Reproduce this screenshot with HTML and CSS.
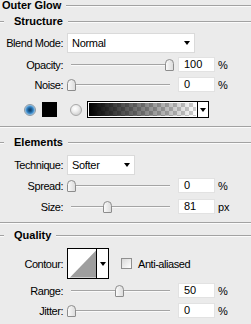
FILE: index.html
```html
<!DOCTYPE html>
<html>
<head>
<meta charset="utf-8">
<link rel="stylesheet" href="styles.css">
</head>
<body>
<div class="panel">
  <div class="title-row"><span class="title">Outer Glow</span><span class="rule"></span></div>

  <div class="legend legend-structure"><span class="rule lead"></span><span class="legend-text">Structure</span><span class="rule"></span></div>

  <div class="row row-blend">
    <span class="lbl">Blend Mode:</span>
    <div class="select select-blend"><span class="select-text">Normal</span><span class="arrow"></span></div>
  </div>

  <div class="row row-slider row-opacity">
    <span class="lbl">Opacity:</span>
    <div class="slider"><span class="track"></span><span class="thumb" style="--p:1"></span></div>
    <span class="field">100</span><span class="unit">%</span>
  </div>

  <div class="row row-slider row-noise">
    <span class="lbl">Noise:</span>
    <div class="slider"><span class="track"></span><span class="thumb" style="--p:0"></span></div>
    <span class="field">0</span><span class="unit">%</span>
  </div>

  <div class="row-color">
    <span class="radio radio-on"></span>
    <span class="swatch"></span>
    <span class="radio radio-off"></span>
    <div class="gradient-pick">
      <span class="gradient-fill"></span>
      <span class="pick-arrow"><span class="arrow"></span></span>
    </div>
  </div>

  <div class="sep sep-structure"></div>

  <div class="legend legend-elements"><span class="rule lead"></span><span class="legend-text">Elements</span><span class="rule"></span></div>

  <div class="row row-technique">
    <span class="lbl">Technique:</span>
    <div class="select select-technique"><span class="select-text">Softer</span><span class="arrow"></span></div>
  </div>

  <div class="row row-slider row-spread">
    <span class="lbl">Spread:</span>
    <div class="slider"><span class="track"></span><span class="thumb" style="--p:0"></span></div>
    <span class="field">0</span><span class="unit">%</span>
  </div>

  <div class="row row-slider row-size">
    <span class="lbl">Size:</span>
    <div class="slider"><span class="track"></span><span class="thumb" style="--p:0.367"></span></div>
    <span class="field">81</span><span class="unit">px</span>
  </div>

  <div class="sep sep-elements"></div>

  <div class="legend legend-quality"><span class="rule lead"></span><span class="legend-text">Quality</span><span class="rule"></span></div>

  <div class="row row-contour">
    <span class="lbl">Contour:</span>
    <div class="contour">
      <span class="contour-preview">
        <svg class="contour-svg" width="29" height="29" viewBox="0 0 29 29"><polygon points="2,29 29,1 29,29" fill="#9e9e9e"/></svg>
      </span>
      <span class="pick-arrow contour-arrow"><span class="arrow"></span></span>
    </div>
    <span class="checkbox"></span>
    <span class="check-label">Anti-aliased</span>
  </div>

  <div class="row row-slider row-range">
    <span class="lbl">Range:</span>
    <div class="slider"><span class="track"></span><span class="thumb" style="--p:0.49"></span></div>
    <span class="field">50</span><span class="unit">%</span>
  </div>

  <div class="row row-slider row-jitter">
    <span class="lbl">Jitter:</span>
    <div class="slider"><span class="track"></span><span class="thumb" style="--p:0"></span></div>
    <span class="field">0</span><span class="unit">%</span>
  </div>
</div>
</body>
</html>
```

FILE: styles.css
```css
html, body {
  margin: 0;
  padding: 0;
  background: #ebebeb;
}

.panel {
  width: 251px;
  height: 324px;
  overflow: hidden;
  background: #ebebeb;
  font-family: "Liberation Sans", Arial, sans-serif;
  font-size: 11px;
  color: #000;
  display: flex;
  flex-direction: column;
}

.rule {
  flex: 1;
  height: 0;
  border-top: 1px solid #a2a2a2;
  border-bottom: 1px solid #fbfbfb;
  align-self: center;
}

.title-row {
  height: 11px;
  line-height: 11px;
  display: flex;
  align-items: center;
  padding-left: 2px;
}

.title {
  font-weight: bold;
  margin-right: 5px;
}

.legend {
  height: 11px;
  line-height: 11px;
  display: flex;
  align-items: center;
}

.legend .lead {
  flex: 0 0 4px;
  margin-right: 10px;
}

.legend-text {
  font-weight: bold;
  margin-right: 5px;
}

.legend-structure { margin-top: 5px; }
.legend-elements { margin-top: 9px; }
.legend-quality { margin-top: 6px; }

.row {
  display: flex;
  align-items: center;
  letter-spacing: -0.45px;
}

.lbl {
  width: 63px;
  text-align: right;
  margin-right: 4px;
  flex: 0 0 auto;
}

.row-blend { margin-top: 6px; height: 20px; }
.row-opacity { margin-top: 4px; }
.row-noise { margin-top: 5px; }
.row-technique { margin-top: 7px; height: 20px; }
.row-spread { margin-top: 3px; }
.row-size { margin-top: 6px; }
.row-contour { margin-top: 7px; height: 31px; }
.row-range { margin-top: 4px; }
.row-jitter { margin-top: 5px; }

.row-slider { height: 15px; }

.select {
  height: 20px;
  box-sizing: border-box;
  background: #fff;
  border: 1px solid #dadada;
  display: flex;
  align-items: center;
  padding-left: 4px;
  padding-right: 4px;
  letter-spacing: -0.3px;
}

.select-text { flex: 1; }

.select-blend { width: 128px; }
.select-technique { width: 68px; }

.arrow {
  width: 0;
  height: 0;
  border-left: 3.5px solid transparent;
  border-right: 3.5px solid transparent;
  border-top: 4px solid #000;
}

.slider {
  position: relative;
  width: 107px;
  height: 15px;
  flex: 0 0 auto;
}

.track {
  position: absolute;
  left: 4px;
  right: 4px;
  top: 7px;
  height: 0;
  border-top: 1px solid #a4a4a4;
  border-bottom: 1px solid #fafafa;
}

.thumb {
  position: absolute;
  top: 2px;
  left: calc(var(--p) * (100% - 9px));
  width: 9px;
  height: 12px;
  box-sizing: border-box;
  border: 1px solid #8c8c8c;
  border-radius: 4.5px 4.5px 1px 1px;
  background: linear-gradient(to right, #fafafa, #dcdcdc);
}

.field {
  width: 37px;
  height: 15px;
  box-sizing: border-box;
  margin-left: 4px;
  background: #fff;
  border: 1px solid #e2e2e2;
  padding-left: 5px;
  line-height: 13px;
  letter-spacing: 0;
}

.unit {
  margin-left: 3px;
  letter-spacing: 0;
}

.row-color {
  margin-top: 9px;
  height: 17px;
  display: flex;
  align-items: center;
  padding-left: 24px;
}

.radio {
  width: 12px;
  height: 12px;
  box-sizing: border-box;
  border-radius: 50%;
  flex: 0 0 auto;
}

.radio-on {
  border: 1px solid #8e9aa4;
  background: radial-gradient(circle at 50% 50%, #103b63 0, #1d5f95 2px, #3d8ccc 3.5px, #9cc6e6 5px);
}

.radio-off {
  margin-left: 13px;
  border: 1px solid #a8a8a8;
  background: radial-gradient(circle at 40% 35%, #ffffff 0, #f0f0f0 3px, #d6d6d6 6px);
}

.swatch {
  width: 15px;
  height: 15px;
  margin-left: 6px;
  background: #000;
  flex: 0 0 auto;
}

.gradient-pick {
  margin-left: 5px;
  width: 122px;
  height: 17px;
  box-sizing: border-box;
  border: 1px solid #000;
  background: #fff;
  display: flex;
}

.gradient-fill {
  flex: 1;
  margin: 1px;
  background:
    linear-gradient(to right, rgba(0,0,0,1), rgba(0,0,0,0)),
    conic-gradient(#cfcfcf 25%, #ffffff 0 50%, #cfcfcf 0 75%, #ffffff 0) 0 0 / 8px 8px;
}

.pick-arrow {
  width: 10px;
  border-left: 1px solid #000;
  background: #fff;
  display: flex;
  align-items: center;
  justify-content: center;
}

.sep {
  height: 0;
  border-top: 1px solid #a2a2a2;
  border-bottom: 1px solid #fbfbfb;
}

.sep-structure { margin-top: 8px; }
.sep-elements { margin-top: 8px; }

.contour {
  width: 42px;
  height: 31px;
  box-sizing: border-box;
  border: 1px solid #000;
  background: #fff;
  display: flex;
  flex: 0 0 auto;
}

.contour-preview {
  flex: 1;
  display: flex;
  align-items: flex-end;
  overflow: hidden;
}

.contour-svg { display: block; }

.contour-arrow { width: 11px; }

.checkbox {
  width: 11px;
  height: 11px;
  box-sizing: border-box;
  margin-left: 12px;
  border: 1px solid #8f8f8f;
  background: linear-gradient(to bottom right, #d8d8d8, #ffffff);
  flex: 0 0 auto;
}

.check-label {
  margin-left: 6px;
}
```
